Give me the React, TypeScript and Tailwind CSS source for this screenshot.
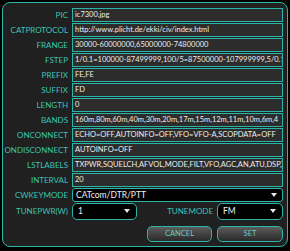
import React from "react";

const rows: [string, string][] = [
  ["PIC", "ic7300.jpg"],
  ["CATPROTOCOL", "http://www.plicht.de/ekki/civ/index.html"],
  ["FRANGE", "30000-60000000,65000000-74800000"],
  ["FSTEP", "1/0.1=100000-87499999,100/5=87500000-107999999,5/0.1"],
  ["PREFIX", "FE,FE"],
  ["SUFFIX", "FD"],
  ["LENGTH", "0"],
  ["BANDS", "160m,80m,60m,40m,30m,20m,17m,15m,12m,11m,10m,6m,4"],
  ["ONCONNECT", "ECHO=OFF,AUTOINFO=OFF,VFO=VFO-A,SCOPDATA=OFF"],
  ["ONDISCONNECT", "AUTOINFO=OFF"],
  ["LSTLABELS", "TXPWR,SQUELCH,AFVOL,MODE,FILT,VFO,AGC,AN,ATU,DSP,T"],
  ["INTERVAL", "20"],
];

const Tri = () => (
  <svg width="6" height="4" viewBox="0 0 6 4" className="shrink-0">
    <polygon points="0,0 6,0 3,4" fill="#e8e8e8" />
  </svg>
);

export default function App() {
  const font = { fontFamily: 'Lato, "Open Sans", sans-serif' };
  return (
    <div className="w-[290px] h-[251px] bg-black p-[2px]" style={font}>
      <div className="h-[245px] border border-[#2bb5a8] rounded-[8px] bg-[#202020] pt-[5px] pr-[4px] text-[7.5px] leading-none">
        <div className="flex flex-col gap-[1px]">
          {rows.map(([l, v]) => (
            <div key={l} className="flex items-center h-[14px]">
              <div className="w-[66px] shrink-0 text-right pr-[1px] text-[#3cc4b4] text-[8px]">{l}</div>
              <div className="ml-[3px] flex-1 h-[14px] border border-[#2bb5a8] bg-[#2c2c2c] text-[#ececec] flex items-center pl-[2px] overflow-hidden whitespace-nowrap">
                {v}
              </div>
            </div>
          ))}
          <div className="flex items-center h-[14px]">
            <div className="w-[66px] shrink-0 text-right pr-[1px] text-[#3cc4b4] text-[8px]">CWKEYMODE</div>
            <div className="ml-[3px] flex-1 h-[14px] border border-[#2bb5a8] rounded-[3px] bg-black text-[#f0f0f0] flex items-center justify-between pl-[3px] pr-[5px] text-[8.5px]">
              <span>CATcom/DTR/PTT</span>
              <Tri />
            </div>
          </div>
          <div className="flex items-center h-[16px]">
            <div className="w-[66px] shrink-0 text-right pr-[1px] text-[#3cc4b4] text-[8px]">TUNEPWR(W)</div>
            <div className="ml-[3px] w-[65px] h-[17px] border border-[#2bb5a8] rounded-[5px] bg-black text-[#f0f0f0] flex items-center justify-between pl-[5px] pr-[6px] text-[8.5px]">
              <span>1</span>
              <Tri />
            </div>
            <div className="flex-1 text-right pr-[4px] text-[#3cc4b4] text-[8px]">TUNEMODE</div>
            <div className="w-[66px] h-[17px] border border-[#2bb5a8] rounded-[5px] bg-black text-[#f0f0f0] flex items-center justify-between pl-[5px] pr-[6px] text-[8.5px]">
              <span>FM</span>
              <Tri />
            </div>
          </div>
        </div>
        <div className="flex justify-end gap-[5px] mt-[7px]">
          <button className="w-[65px] h-[16px] border border-[#2bb5a8] rounded-[5px] bg-gradient-to-b from-[#5c5c5c] to-[#2a2a2a] text-[#6fc9c0] text-[7.5px] leading-none">CANCEL</button>
          <button className="w-[66px] h-[16px] border border-[#2bb5a8] rounded-[5px] bg-gradient-to-b from-[#5c5c5c] to-[#2a2a2a] text-[#6fc9c0] text-[7.5px] leading-none">SET</button>
        </div>
      </div>
    </div>
  );
}
